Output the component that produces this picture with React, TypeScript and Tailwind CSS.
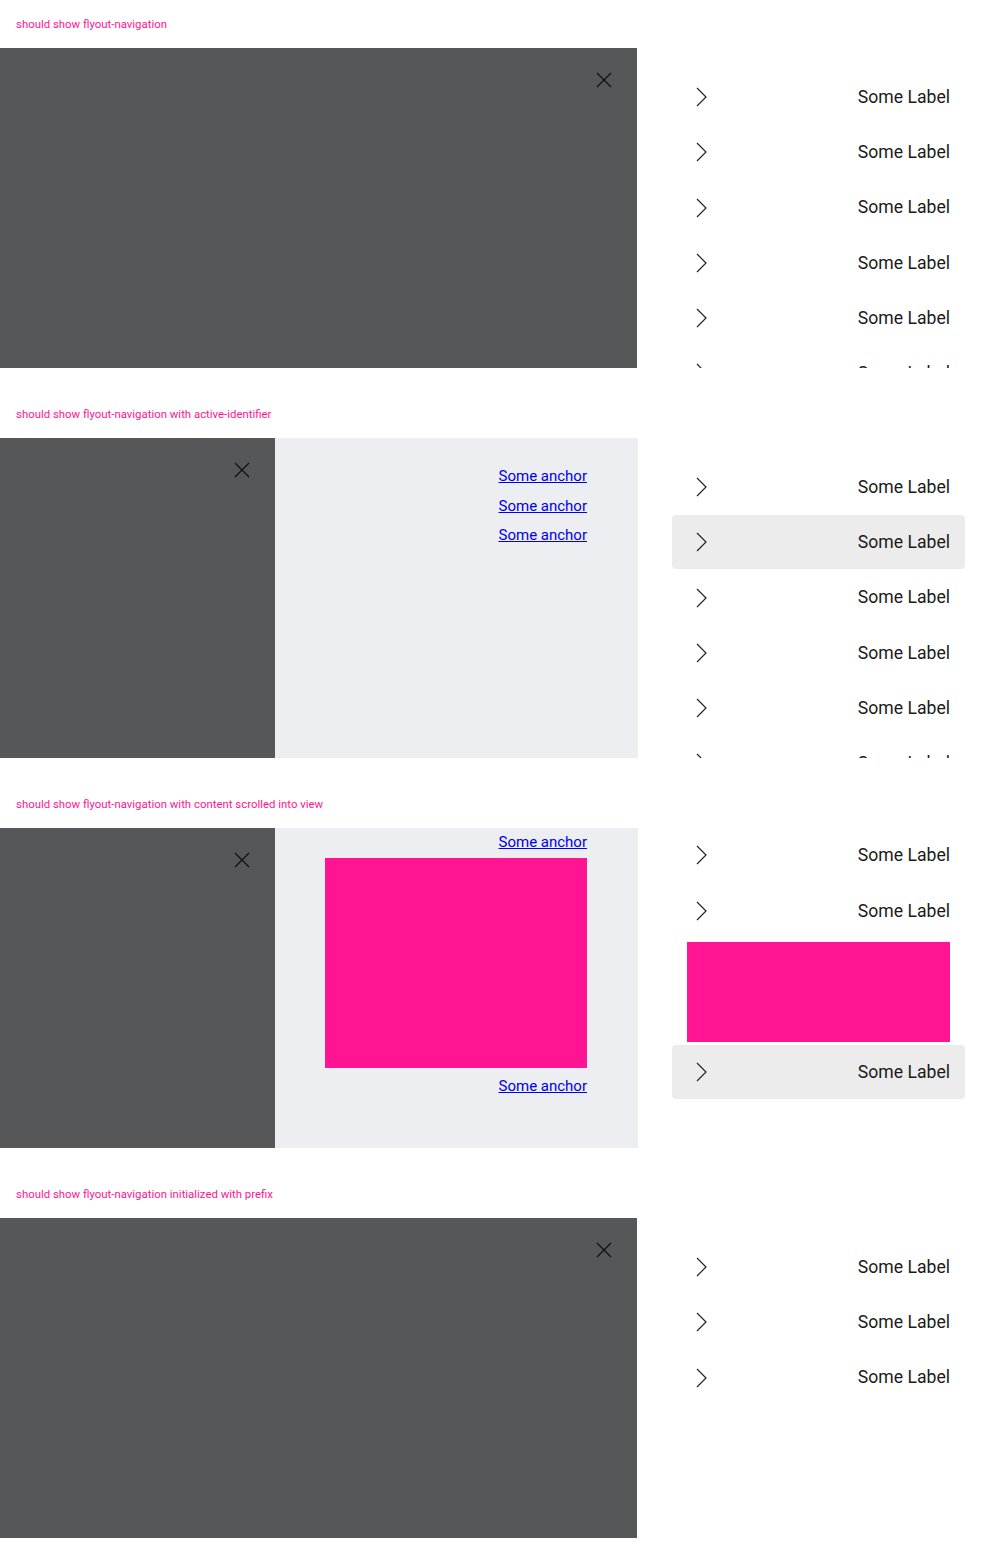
import React from "react";

const font = { fontFamily: "Roboto, 'Noto Sans', sans-serif" };

const CloseIcon = () => (
  <svg width="16" height="16" viewBox="0 0 16 16" fill="none">
    <path d="M1 1 L15 15 M15 1 L1 15" stroke="#111" strokeWidth="1.3" />
  </svg>
);

const Chevron = () => (
  <svg width="24" height="24" viewBox="0 0 24 24" fill="none">
    <path d="M10 3 L19 12 L10 21" stroke="#222" strokeWidth="1.2" />
  </svg>
);

const NavItem: React.FC<{ active?: boolean; className?: string }> = ({
  active,
  className = "",
}) => (
  <div
    className={`h-[54px] shrink-0 flex items-center justify-between px-[15px] rounded-[4px] ${
      active ? "bg-[#ececec]" : ""
    } ${className}`}
  >
    <Chevron />
    <span className="text-[17.6px] text-[#1a1a1a]">Some Label</span>
  </div>
);

const Title: React.FC<{ text: string }> = ({ text }) => (
  <div className="h-12 flex items-center pl-4 pt-[2px] text-[11.4px] text-[#ff1493]">
    {text}
  </div>
);

const DarkPanel: React.FC<{ className?: string }> = ({ className = "" }) => (
  <div
    className={`bg-[#555759] flex justify-end items-start pt-[24px] pr-[25px] ${className}`}
  >
    <CloseIcon />
  </div>
);

const Anchor = ({ className = "" }: { className?: string }) => (
  <a
    href="#"
    className={`block text-[15px] text-[#0000ee] underline ${className}`}
  >
    Some anchor
  </a>
);

const NavList: React.FC<{ count: number; activeIndex?: number }> = ({
  count,
  activeIndex,
}) => (
  <div className="w-[362px] h-full overflow-hidden pl-[34px] pr-[35px] pt-[22px] flex flex-col gap-[1.25px]">
    {Array.from({ length: count }).map((_, i) => (
      <NavItem key={i} active={i === activeIndex} />
    ))}
  </div>
);

export default function App() {
  return (
    <div className="w-[1000px] bg-white" style={font}>
      {/* 1 */}
      <section className="mb-[22px]">
        <Title text="should show flyout-navigation" />
        <div className="h-[320px] flex">
          <div className="flex-1 flex">
            <DarkPanel className="w-[637px]" />
          </div>
          <NavList count={7} />
        </div>
      </section>

      {/* 2 */}
      <section className="mb-[22px]">
        <Title text="should show flyout-navigation with active-identifier" />
        <div className="h-[320px] flex">
          <DarkPanel className="w-[275px]" />
          <div className="flex-1 bg-[#edeef2] flex flex-col items-end pr-[51px] pt-[24px] leading-[29.5px]">
            <Anchor />
            <Anchor />
            <Anchor />
          </div>
          <NavList count={7} activeIndex={1} />
        </div>
      </section>

      {/* 3 */}
      <section className="mb-[22px]">
        <Title text="should show flyout-navigation with content scrolled into view" />
        <div className="h-[320px] flex">
          <DarkPanel className="w-[275px]" />
          <div className="flex-1 bg-[#edeef2] flex flex-col items-end pr-[51px] pt-px leading-[26px] overflow-hidden">
            <Anchor />
            <div className="w-[262px] h-[210px] bg-[#ff1493] mt-[3px] shrink-0" />
            <Anchor className="mt-[5px]" />
          </div>
          <div className="w-[362px] h-full overflow-hidden pl-[34px] pr-[35px] flex flex-col">
            <NavItem />
            <NavItem className="mt-[2px]" />
            <div className="mx-[15px] mt-[4px] h-[100px] shrink-0 bg-[#ff1493]" />
            <NavItem active className="mt-[3px]" />
          </div>
        </div>
      </section>

      {/* 4 */}
      <section className="mb-[22px]">
        <Title text="should show flyout-navigation initialized with prefix" />
        <div className="h-[320px] flex">
          <div className="flex-1 flex">
            <DarkPanel className="w-[637px]" />
          </div>
          <NavList count={3} />
        </div>
      </section>
    </div>
  );
}
